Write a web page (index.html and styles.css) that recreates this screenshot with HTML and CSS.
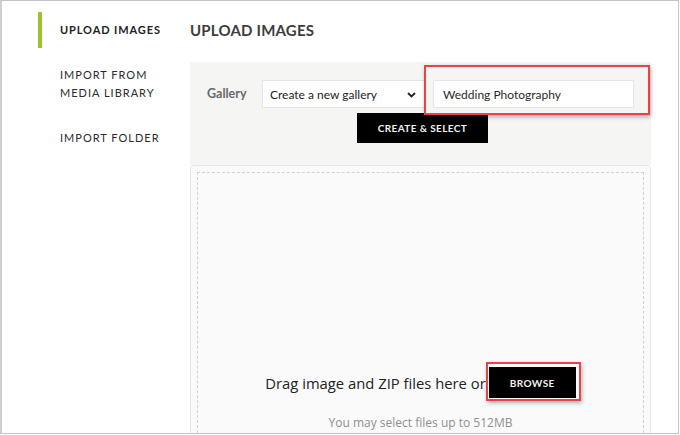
FILE: index.html
```html
<!DOCTYPE html>
<html>
<head>
<meta charset="utf-8">
<link rel="stylesheet" href="styles.css">
</head>
<body>
<div class="frame">
  <nav class="sidebar">
    <div class="nav-item active">UPLOAD IMAGES</div>
    <div class="nav-item two-line">IMPORT FROM<br>MEDIA LIBRARY</div>
    <div class="nav-item third">IMPORT FOLDER</div>
  </nav>
  <main class="main">
    <h1 class="title">UPLOAD IMAGES</h1>
    <section class="gallery-panel">
      <div class="gallery-row">
        <label class="gallery-label">Gallery</label>
        <div class="select">
          <span>Create a new gallery</span>
          <svg class="chev" width="9" height="6" viewBox="0 0 9 6"><path d="M1 1 L4.5 4.5 L8 1" fill="none" stroke="#222" stroke-width="1.8"/></svg>
        </div>
        <div class="input-wrap">
          <div class="text-input">Wedding Photography</div>
          <div class="highlight hl-input"></div>
        </div>
      </div>
      <div class="btn-row">
        <button class="btn create">CREATE &amp; SELECT</button>
      </div>
    </section>
    <section class="drop-panel">
      <div class="dropzone">
        <div class="drop-row">
          <span class="drop-text">Drag image and ZIP files here or</span>
          <div class="browse-wrap">
            <button class="btn browse">BROWSE</button>
            <div class="highlight hl-browse"></div>
          </div>
        </div>
        <div class="limit">You may select files up to 512MB</div>
      </div>
    </section>
  </main>
</div>
</body>
</html>
```
FILE: styles.css
```css
* { box-sizing: border-box; }
html, body { margin: 0; padding: 0; background: #fff; }
.frame {
  width: 679px;
  height: 434px;
  border: 1px solid #c4c4c4;
  border-left: 2px solid #cfcfcf;
  display: flex;
  overflow: hidden;
  font-family: Lato, "Liberation Sans", sans-serif;
  background: #fff;
}
.sidebar {
  width: 188px;
  flex: none;
  padding-left: 36px;
  padding-top: 11px;
  display: flex;
  flex-direction: column;
}
.nav-item {
  font-size: 11px;
  letter-spacing: 1px;
  color: #2b2b2b;
  padding-left: 22px;
  line-height: 18px;
}
.nav-item.active {
  border-left: 4px solid #9cc22c;
  padding-left: 18px;
  height: 36px;
  display: flex;
  align-items: center;
  font-weight: bold;
  color: #222;
  letter-spacing: 0.9px;
}
.nav-item.two-line { margin-top: 18px; }
.nav-item.third { margin-top: 27px; }
.main {
  flex: none;
  width: 461px;
  display: flex;
  flex-direction: column;
}
.title {
  margin: 0;
  height: 61px;
  padding-top: 19px;
  font-size: 15px;
  line-height: 20px;
  font-weight: bold;
  color: #3d3d3d;
  letter-spacing: 0.2px;
}
.gallery-panel {
  background: #f5f5f4;
  height: 103px;
  padding: 18px 17px 0 17px;
}
.gallery-row {
  display: flex;
  align-items: center;
  height: 28px;
}
.gallery-label {
  width: 55px;
  font-size: 12.5px;
  font-weight: bold;
  color: #6a6a6a;
  margin-top: -2px;
}
.select {
  width: 163px;
  height: 28px;
  background: #fff;
  border: 1px solid #e6e6e6;
  display: flex;
  align-items: center;
  justify-content: space-between;
  padding: 0 8px 0 7px;
  font-size: 12px;
  color: #222;
}
.chev { margin-top: 1px; }
.input-wrap {
  position: relative;
  margin-left: 8px;
}
.text-input {
  width: 201px;
  height: 28px;
  background: #fff;
  border: 1px solid #e6e6e6;
  display: flex;
  align-items: center;
  padding-left: 9px;
  font-size: 12px;
  color: #2a2a2a;
}
.highlight {
  position: absolute;
  border: 2px solid #ec4148;
  box-shadow: 1px 2px 4px rgba(0,0,0,0.3);
  pointer-events: none;
}
.hl-input { left: -9px; top: -15px; right: -16px; bottom: -7px; }
.btn-row {
  display: flex;
  justify-content: center;
  padding-left: 4px;
  margin-top: 5px;
}
.btn {
  background: #000;
  color: #f2f2f2;
  border: none;
  font-family: Lato, "Liberation Sans", sans-serif;
  font-weight: bold;
  font-size: 10px;
  letter-spacing: 0.4px;
  padding: 0;
}
.btn.create { width: 131px; height: 30px; }
.drop-panel {
  flex: 1;
  background: #fafafa;
  border: 1px solid #e7e7e7;
  border-bottom: none;
  border-radius: 4px 4px 0 0;
  padding: 6px 6px 0 6px;
}
.dropzone {
  height: 100%;
  border: 1px dashed #d2d2d2;
  border-bottom: none;
  display: flex;
  flex-direction: column;
  align-items: center;
  padding-top: 194px;
}
.drop-row {
  display: flex;
  align-items: center;
}
.drop-text {
  font-family: "Open Sans", sans-serif;
  font-size: 14.8px;
  color: #222;
  margin-right: 3px;
}
.browse-wrap { position: relative; }
.btn.browse { width: 87px; height: 31px; display: block; }
.hl-browse { left: -3px; top: -5px; right: -5px; bottom: -3px; }
.limit {
  margin-top: 16px;
  font-family: "Open Sans", sans-serif;
  font-size: 12px;
  color: #8f8f8f;
}
```
